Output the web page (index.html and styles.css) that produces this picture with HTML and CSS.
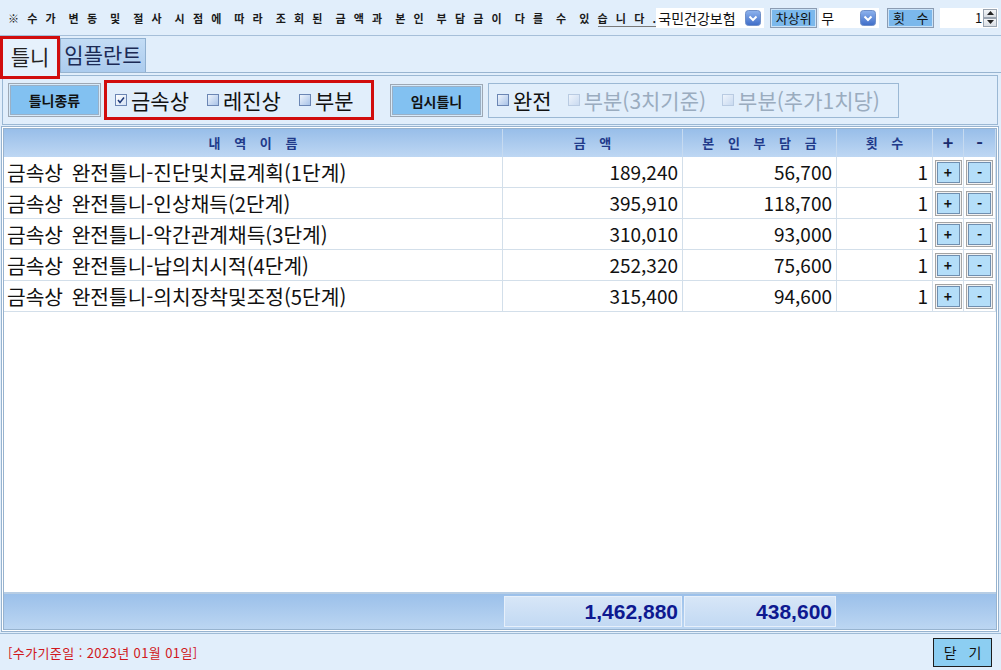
FILE: index.html
```html
<!DOCTYPE html>
<html lang="ko">
<head>
    <meta charset="UTF-8">
    <title>틀니 수가 조회</title>
    <link rel="stylesheet" href="styles.css">
</head>
<body>

    <div class="topbar">
        <span class="notice">※수가 변동 및 절사 시점에 따라 조회된 금액과 본인 부담금이 다를 수 있<span class="ul">습니다.</span></span>
        <div class="combo combo-ins">
            <span>국민건강보험</span>
            <svg class="drop" width="16" height="16" viewBox="0 0 16 16"><defs><linearGradient id="dg" x1="0" y1="0" x2="0" y2="1"><stop offset="0" stop-color="#8fb4ee"/><stop offset="1" stop-color="#3d6cc8"/></linearGradient></defs><rect x="0.5" y="0.5" width="15" height="15" rx="3" fill="url(#dg)" stroke="#6f8fc8"/><path d="M4.5 6.5 L8 10 L11.5 6.5" fill="none" stroke="#fff" stroke-width="2"/></svg>
        </div>
        <div class="lbl-btn">차상위</div>
        <div class="combo combo-low">
            <span>무</span>
            <svg class="drop" width="16" height="16" viewBox="0 0 16 16"><rect x="0.5" y="0.5" width="15" height="15" rx="3" fill="url(#dg)" stroke="#6f8fc8"/><path d="M4.5 6.5 L8 10 L11.5 6.5" fill="none" stroke="#fff" stroke-width="2"/></svg>
        </div>
        <div class="lbl-btn lbl-cnt">횟 수</div>
        <div class="spin">
            <span class="spin-val">1</span>
            <div class="spin-btns">
                <span class="spin-b"><svg width="7" height="4" viewBox="0 0 7 4"><path d="M0 4 L3.5 0 L7 4 Z" fill="#222"/></svg></span>
                <span class="spin-b"><svg width="7" height="4" viewBox="0 0 7 4"><path d="M0 0 L3.5 4 L7 0 Z" fill="#222"/></svg></span>
            </div>
        </div>
    </div>

    <div class="tabs">
        <div class="tab tab-active">틀니</div>
        <div class="tab">임플란트</div>
    </div>

    <div class="panel">
        <div class="kind-btn">틀니종류</div>
        <div class="mark-box">
            <label class="cb-item"><span class="cb checked"><svg width="10" height="10" viewBox="0 0 10 10"><path d="M2 5 L4 7.5 L8 2.5" fill="none" stroke="#1e3a78" stroke-width="1.5"/></svg></span>금속상</label>
            <label class="cb-item"><span class="cb"></span>레진상</label>
            <label class="cb-item"><span class="cb"></span>부분</label>
        </div>
        <div class="kind-btn kind-temp">임시틀니</div>
        <div class="group-box">
            <label class="cb-item"><span class="cb"></span>완전</label>
            <label class="cb-item off"><span class="cb"></span>부분(3치기준)</label>
            <label class="cb-item off"><span class="cb"></span>부분(추가1치당)</label>
        </div>
    </div>

    <div class="grid">
        <div class="row head">
            <div class="c spaced">내 역 이 름</div>
            <div class="c spaced">금 액</div>
            <div class="c spaced">본 인 부 담 금</div>
            <div class="c spaced">횟 수</div>
            <div class="c sign">+</div>
            <div class="c sign">-</div>
        </div>
        <div class="body">
            <div class="row item">
                <div class="c name">금속상 완전틀니-진단및치료계획(1단계)</div>
                <div class="c num">189,240</div>
                <div class="c num">56,700</div>
                <div class="c num">1</div>
                <div class="c btn-cell"><span class="mini">+</span></div>
                <div class="c btn-cell"><span class="mini">-</span></div>
            </div>
            <div class="row item">
                <div class="c name">금속상 완전틀니-인상채득(2단계)</div>
                <div class="c num">395,910</div>
                <div class="c num">118,700</div>
                <div class="c num">1</div>
                <div class="c btn-cell"><span class="mini">+</span></div>
                <div class="c btn-cell"><span class="mini">-</span></div>
            </div>
            <div class="row item">
                <div class="c name">금속상 완전틀니-악간관계채득(3단계)</div>
                <div class="c num">310,010</div>
                <div class="c num">93,000</div>
                <div class="c num">1</div>
                <div class="c btn-cell"><span class="mini">+</span></div>
                <div class="c btn-cell"><span class="mini">-</span></div>
            </div>
            <div class="row item">
                <div class="c name">금속상 완전틀니-납의치시적(4단계)</div>
                <div class="c num">252,320</div>
                <div class="c num">75,600</div>
                <div class="c num">1</div>
                <div class="c btn-cell"><span class="mini">+</span></div>
                <div class="c btn-cell"><span class="mini">-</span></div>
            </div>
            <div class="row item">
                <div class="c name">금속상 완전틀니-의치장착및조정(5단계)</div>
                <div class="c num">315,400</div>
                <div class="c num">94,600</div>
                <div class="c num">1</div>
                <div class="c btn-cell"><span class="mini">+</span></div>
                <div class="c btn-cell"><span class="mini">-</span></div>
            </div>
        </div>
        <div class="row total">
            <div class="c"></div>
            <div class="c sum">1,462,880</div>
            <div class="c sum">438,600</div>
            <div class="c"></div>
            <div class="c"></div>
            <div class="c"></div>
        </div>
    </div>

    <div class="bottombar">
        <span class="base-date">[수가기준일 : 2023년 01월 01일]</span>
        <div class="close-btn">닫 기</div>
    </div>

</body>
</html>
```

FILE: styles.css
```css
* {
    box-sizing: border-box;
}
body {
    margin: 0;
    width: 1001px;
    height: 670px;
    overflow: hidden;
    background: #e1eefb;
    font-family: "Noto Sans CJK KR", "Noto Sans", sans-serif;
    color: #111;
}

/* top line */
.topbar {
    height: 36px;
    display: flex;
    align-items: center;
    padding-left: 8px;
    border-bottom: 1px solid #a6bfd9;
}
.notice {
    font-size: 11px;
    font-weight: bold;
    letter-spacing: 8.2px;
    word-spacing: -6.5px;
    white-space: nowrap;
    line-height: 20px;
    color: #1a1a1a;
}
.notice .ul {
    border-bottom: 1px solid #7a7a7a;
}
.combo {
    height: 20px;
    background: white;
    display: flex;
    align-items: center;
    justify-content: space-between;
    padding: 0 3px 0 2px;
    font-size: 14px;
    line-height: 20px;
}
.combo-ins {
    width: 108px;
    margin-left: -8px;
}
.combo-low {
    width: 60px;
    margin-left: 2px;
}
.lbl-btn {
    height: 20px;
    width: 47px;
    margin-left: 6px;
    background: #7bb8ec;
    border: 1px solid #8c9cb2;
    box-shadow: inset 0 0 0 1px #c9e2f8;
    font-size: 13px;
    line-height: 18px;
    text-align: center;
    color: #111;
}
.lbl-cnt {
    margin-left: 8px;
    letter-spacing: 4px;
    padding-left: 4px;
}
.spin {
    width: 58px;
    height: 20px;
    margin-left: 6px;
    background: white;
    display: flex;
    align-items: center;
    justify-content: flex-end;
    font-size: 13px;
    line-height: 18px;
}
.spin-val {
    padding-right: 1px;
}
.spin-btns {
    display: flex;
    flex-direction: column;
    width: 14px;
    height: 18px;
    margin-right: 1px;
}
.spin-b {
    flex: 1;
    display: flex;
    align-items: center;
    justify-content: center;
    background: linear-gradient(#f4f6f8, #d9dee4);
    border: 1px solid #9aa4b0;
}

/* tabs */
.tabs {
    height: 37px;
    display: flex;
    align-items: flex-start;
    border-bottom: 1px solid #98b4d0;
}
.tab {
    height: 34px;
    width: 86px;
    margin-top: 2px;
    background: linear-gradient(#c3dcf5, #acccee);
    border: 1px solid #90b0d0;
    border-bottom: none;
    font-size: 21px;
    line-height: 30px;
    text-align: center;
    color: #1b2a55;
}
.tab-active {
    position: relative;
    z-index: 2;
    width: 60px;
    height: 43px;
    margin-top: 0;
    background: #e6f1fc;
    border: 3px solid #d10d0d;
    line-height: 34px;
    color: #222;
}

/* selection panel */
.panel {
    height: 50px;
    margin: 2px 3px 0 2px;
    border: 1px solid #9bb8d4;
    display: flex;
    align-items: center;
    padding-left: 5px;
}
.kind-btn {
    width: 93px;
    height: 34px;
    background: #82c1f1;
    border: 1px solid #9ea8b4;
    box-shadow: inset 0 0 0 1px #d6eafa, inset 0 0 0 2px #9ab0c6;
    font-size: 14px;
    font-weight: bold;
    line-height: 32px;
    text-align: center;
    color: #111;
}
.kind-temp {
    margin-left: 16px;
    height: 33px;
}
.mark-box {
    position: relative;
    z-index: 2;
    width: 270px;
    height: 40px;
    margin-left: 3px;
    border: 3px solid #d10d0d;
    display: flex;
    align-items: center;
    gap: 18px;
    padding-left: 8px;
}
.group-box {
    width: 411px;
    height: 35px;
    margin-left: 5px;
    border: 1px solid #9bb8d4;
    display: flex;
    align-items: center;
    gap: 16px;
    padding-left: 8px;
}
.cb-item {
    display: flex;
    align-items: center;
    gap: 4px;
    font-size: 21px;
    line-height: 26px;
    color: #111;
}
.cb-item.off {
    color: #9aacbf;
}
.cb {
    width: 12px;
    height: 12px;
    border: 1px solid #6b86b4;
    background: linear-gradient(135deg, #eef4fc, #a9c3e8);
    display: flex;
    align-items: center;
    justify-content: center;
}
.cb.checked {
    background: linear-gradient(135deg, #ffffff, #d4e2f4);
}
.cb-item.off .cb {
    border-color: #b9cbe2;
    background: linear-gradient(135deg, #eef4fc, #c9daf0);
}

/* list */
.grid {
    height: 506px;
    margin: 1px 2px 0 1px;
    border: 3px double #97b3cf;
    background: white;
    display: flex;
    flex-direction: column;
}
.row {
    display: grid;
    grid-template-columns: 499px 180px 154px 96px 31px 32px;
}
.head {
    height: 28px;
    background: linear-gradient(#98bee9, #bed7f3);
}
.head .c {
    border-right: 1px solid #c6daf0;
    font-size: 13px;
    font-weight: bold;
    color: #213a8a;
    text-align: center;
    line-height: 27px;
}
.head .spaced {
    letter-spacing: 5px;
    padding-left: 5px;
}
.head .sign {
    font-size: 18px;
    color: #1a2c6e;
}
.body {
    flex: 1;
}
.item {
    height: 31px;
    border-bottom: 1px solid #d3dfea;
}
.item .c {
    border-right: 1px solid #d3dfea;
    font-size: 19px;
    line-height: 30px;
    white-space: nowrap;
}
.item .name {
    padding-left: 3px;
    font-size: 20.3px;
    word-spacing: 3px;
}
.item .num {
    text-align: right;
    padding-right: 4px;
}
.btn-cell {
    display: flex;
    align-items: center;
    justify-content: center;
}
.mini {
    width: 27px;
    height: 25px;
    background: #b4def9;
    border: 1px solid #a4a4a4;
    box-shadow: inset 0 0 0 1px #f2f2f2, inset 0 0 0 2px #6f8fb0;
    font-size: 14px;
    font-weight: bold;
    line-height: 22px;
    text-align: center;
    color: #111;
}
.total {
    height: 37px;
    padding: 2px 0 3px;
    border-top: 2px solid #b7cde4;
    background: linear-gradient(#9bc0ea, #bcd6f2);
}
.total .sum {
    margin: 0 1px;
    background: linear-gradient(#d7e6f7, #c2d9f3);
    border: 1px solid #e6effa;
    font-size: 21px;
    font-weight: bold;
    color: #0e1990;
    text-align: right;
    padding-right: 3px;
    line-height: 29px;
    font-family: "Liberation Sans", Arial, sans-serif;
}

/* bottom */
.bottombar {
    height: 38px;
    margin-top: 1px;
    border-top: 1px solid #9fbbd6;
    display: flex;
    align-items: center;
    justify-content: space-between;
    padding: 0 9px 0 8px;
}
.base-date {
    font-size: 13px;
    letter-spacing: 0.4px;
    color: #d01820;
}
.close-btn {
    width: 59px;
    height: 29px;
    background: #8ccef2;
    border: 1px solid #1e1e1e;
    font-size: 14px;
    line-height: 27px;
    text-align: center;
    letter-spacing: 4px;
    padding-left: 4px;
}
```
